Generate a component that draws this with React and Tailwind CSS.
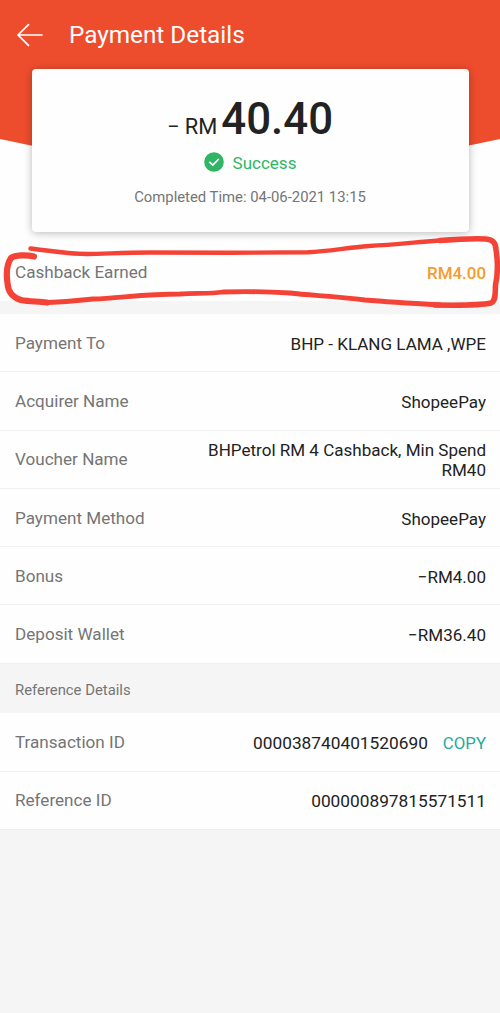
const details = [
  { label: 'Payment To', value: 'BHP - KLANG LAMA ,WPE' },
  { label: 'Acquirer Name', value: 'ShopeePay' },
  { label: 'Voucher Name', value: 'BHPetrol RM 4 Cashback, Min Spend RM40' },
  { label: 'Payment Method', value: 'ShopeePay' },
  { label: 'Bonus', value: '−RM4.00' },
  { label: 'Deposit Wallet', value: '−RM36.40' },
];

function Row({ label, value, action, numeric }) {
  return (
    <div className="flex h-[58.3px] items-center justify-between border-b border-[#f0f0f0] bg-[#fefefe] pl-[15px] pr-[14px] pt-[2px] text-[17.1px] leading-5">
      <span className="relative -top-px shrink-0 text-[#757575]">{label}</span>
      <span className="flex max-w-[290px] items-center gap-[15px] text-right text-[#222]">
        <span className={numeric ? 'text-[17.3px]' : 'text-[17.05px]'}>{value}</span>
        {action && <button className="text-[16.8px] text-[#26aa99]">{action}</button>}
      </span>
    </div>
  );
}

function Header() {
  return (
    <header className="relative h-[240px] bg-[#fefefe]">
      <svg className="absolute inset-0" width="500" height="240" aria-hidden="true">
        <path d="M0 0H500V139Q250 195 0 139Z" fill="#ee4d2d" />
      </svg>
      <div className="relative flex h-[69px] items-center pl-[17px] text-white">
        <svg width="27" height="24" viewBox="0 0 27 24" fill="none" stroke="currentColor" strokeWidth="1.7" strokeLinecap="round" strokeLinejoin="round">
          <path d="M25 12H1M11.5 1.7L1 12L11.5 22.3" />
        </svg>
        <h1 className="ml-[25px] text-[24.3px] leading-7">Payment Details</h1>
      </div>
      <section className="relative mx-[31.5px] flex h-[163px] flex-col items-center rounded-[4px] bg-[#fefefe] shadow-[0_1px_8px_rgba(0,0,0,0.28)]">
        <div className="mt-[24px] flex h-[52px] items-baseline leading-[52px] text-[#222]">
          <span className="text-[21.8px]">− RM</span>
          <span className="ml-1 text-[43.8px] font-medium">40.40</span>
        </div>
        <div className="mt-[7px] flex items-center gap-[9px] text-[17px] leading-5 text-[#30b566]">
          <svg width="20" height="20" viewBox="0 0 20 20" fill="none">
            <circle cx="10" cy="10" r="9.8" fill="#30b566" />
            <path d="M5.3 9.8L8.8 13L14.8 7" stroke="white" strokeWidth="1.7" />
          </svg>
          <span className="relative top-[0.5px]">Success</span>
        </div>
        <p className="mt-[15px] text-[14.85px] leading-5 text-[#757575]">Completed Time: 04-06-2021 13:15</p>
      </section>
    </header>
  );
}

function Highlight() {
  return (
    <svg className="pointer-events-none absolute left-0 top-0" width="500" height="320" fill="none" stroke="#f44336" strokeLinecap="round" strokeLinejoin="round" aria-hidden="true">
      <path strokeWidth="4.4" d="M30.5 248.5C45 250 65 254 87 254C105 254 120 252.5 150 252.5L230 252.8L308 252.3C330 251 345 248 369 246C400 244.5 430 240.5 457 239.5" />
      <path strokeWidth="5.5" d="M440 240.5C460 239 477 238.5 486 239C493 239.5 496 243 496 250C498 262 498 273 495.5 285C495 294 496 301 491 303C480 305.5 465 305.5 435 305" />
      <path strokeWidth="4.8" d="M440 305C415 303.5 390 302 365 300C335 296 310 295.5 290 293C265 291.5 240 291.5 223 292C210 294 195 293 180 294C145 294 120 298 93 299C75 301 60 302 48 302.5" />
      <path strokeWidth="6.2" d="M34 256.5C26 254.5 15 255 11 258C7 264 6 273 7.5 283C8 292 12 297 21 300C30 302 38 301 47 302.5" />
    </svg>
  );
}

export default function App() {
  return (
    <main className="relative h-[1013px] w-[500px] overflow-hidden bg-[#f5f5f5] font-[Roboto,sans-serif]">
      <Header />
      <div className="flex h-[61.3px] items-center justify-between bg-[#fefefe] pl-[15px] pr-[14px] text-[17.1px] leading-5">
        <span className="relative top-[1.5px] text-[#757575]">Cashback Earned</span>
        <span className="relative top-[2.5px] text-[16.9px] font-medium text-[#f69b2c]">RM4.00</span>
      </div>
      <div className="mt-[12.7px]">
        {details.map((d) => <Row key={d.label} {...d} />)}
      </div>
      <h2 className="flex h-[49.7px] items-center pl-[15px] pt-[3px] text-[14.85px] text-[#757575]">Reference Details</h2>
      <Row label="Transaction ID" value="000038740401520690" action="COPY" numeric />
      <Row label="Reference ID" value="000000897815571511" numeric />
      <Highlight />
    </main>
  );
}
